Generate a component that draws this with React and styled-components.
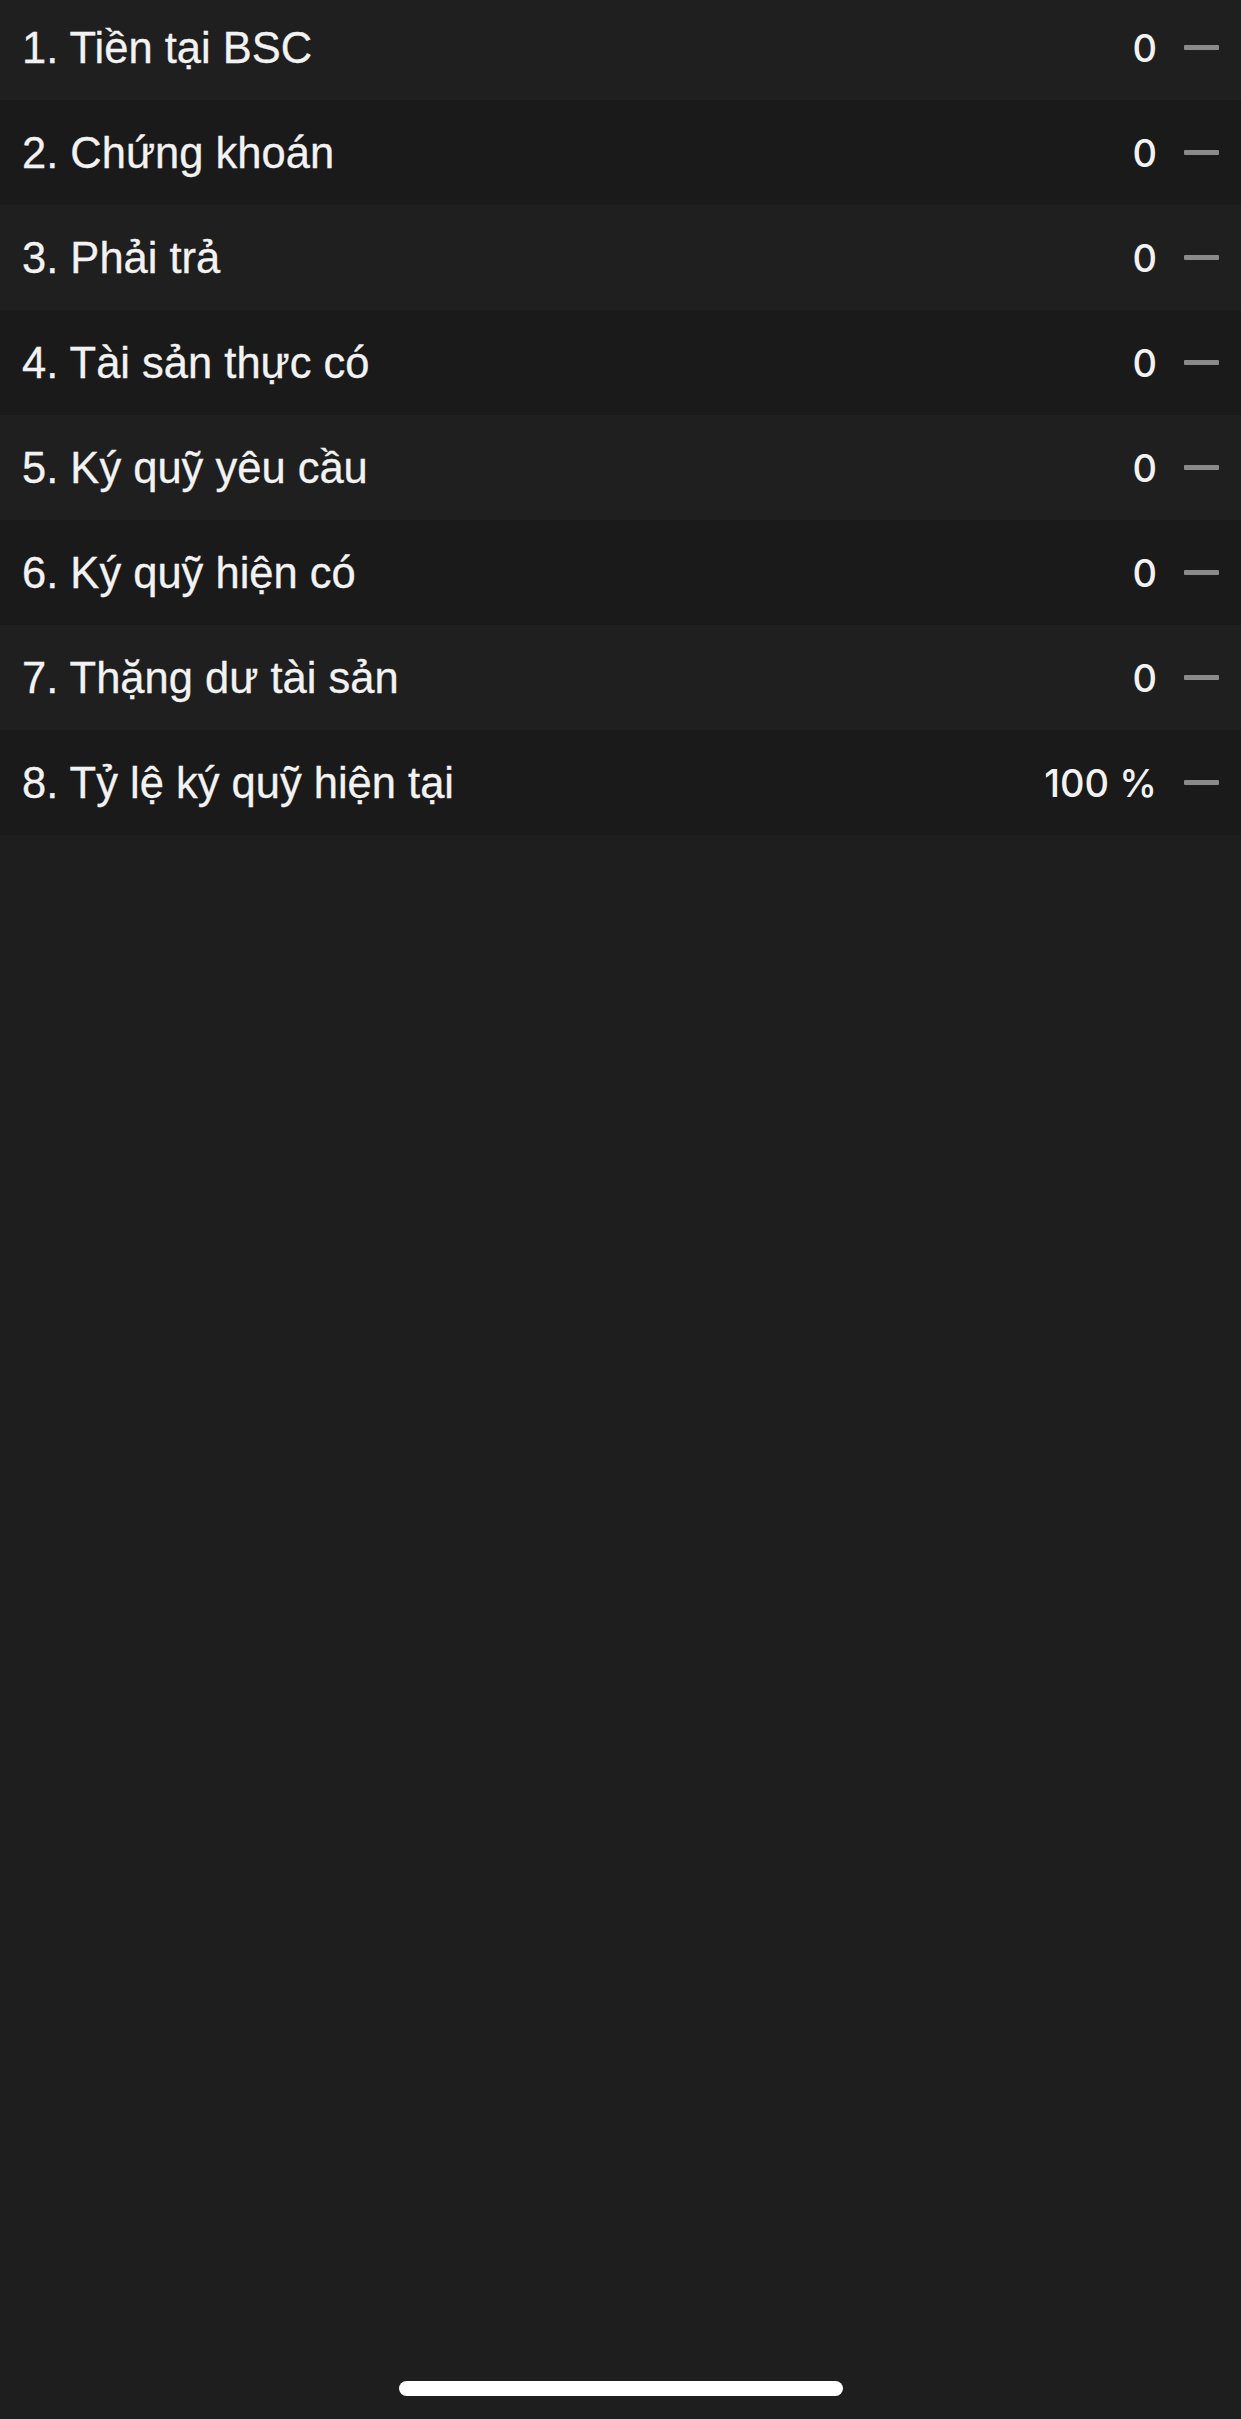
import React from "react";
import styled, { createGlobalStyle } from "styled-components";

const items = [
  { label: "1. Tiền tại BSC", value: "0" },
  { label: "2. Chứng khoán", value: "0" },
  { label: "3. Phải trả", value: "0" },
  { label: "4. Tài sản thực có", value: "0" },
  { label: "5. Ký quỹ yêu cầu", value: "0" },
  { label: "6. Ký quỹ hiện có", value: "0" },
  { label: "7. Thặng dư tài sản", value: "0" },
  { label: "8. Tỷ lệ ký quỹ hiện tại", value: "100 %" },
];

const App = () => {
  return (
    <>
      <GlobalStyle />
      <Screen>
        <List>
          {items.map((item, i) => (
            <Row key={item.label} $dark={i % 2 === 1}>
              <Label>{item.label}</Label>
              <Right>
                <Value>{item.value}</Value>
                <Dash />
              </Right>
            </Row>
          ))}
        </List>
        <HomeIndicator />
      </Screen>
    </>
  );
};

export default App;

const GlobalStyle = createGlobalStyle`
  html, body {
    margin: 0;
    padding: 0;
    background-color: #1e1e1e;
  }

  * {
    box-sizing: border-box;
  }
`;

const Screen = styled.div`
  width: 100%;
  height: 100vh;
  display: flex;
  flex-direction: column;
  overflow: hidden;
  background-color: #1e1e1e;
`;

const List = styled.div`
  margin-top: -5px;
  display: flex;
  flex-direction: column;
`;

const Row = styled.div`
  height: 105px;
  padding: 0 22px 0 22px;
  display: flex;
  align-items: center;
  justify-content: space-between;
  background-color: ${(p) => (p.$dark ? "#1a1a1a" : "#1f1f1f")};
`;

const Label = styled.span`
  font-family: "Liberation Sans", Arial, sans-serif;
  font-size: 43.5px;
  color: #f2f2f2;
  padding-top: 2px;
  -webkit-text-stroke: 0.3px #f2f2f2;
`;

const Right = styled.div`
  display: flex;
  align-items: center;
  gap: 27px;
`;

const Value = styled.span`
  font-family: Inter, "Noto Sans", sans-serif;
  font-size: 38px;
  font-weight: 500;
  color: #f2f2f2;
`;

const Dash = styled.span`
  width: 35px;
  height: 5px;
  border-radius: 1px;
  background-color: #8a8a8a;
`;

const HomeIndicator = styled.div`
  margin: auto auto 23px;
  width: 444px;
  height: 15px;
  border-radius: 8px;
  background-color: #ffffff;
`;
